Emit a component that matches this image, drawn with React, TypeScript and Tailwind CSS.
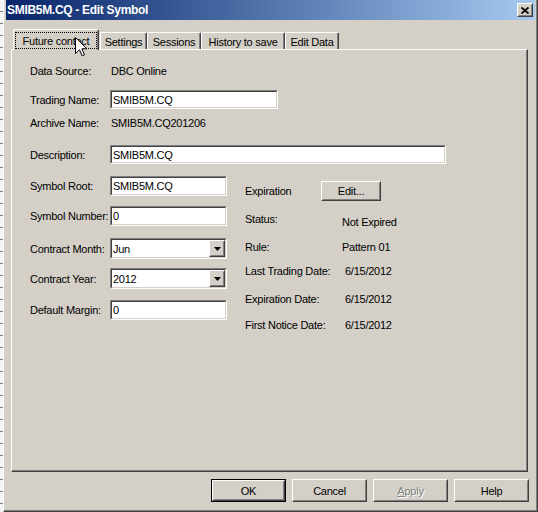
import React from "react";

const face = "bg-[#d4d0c8]";

function Sunken({ className = "", children }: { className?: string; children?: React.ReactNode }) {
  return (
    <div className={`border border-t-[#808080] border-l-[#808080] border-r-white border-b-white ${className}`}>
      <div className="h-full border border-t-[#404040] border-l-[#404040] border-r-[#d4d0c8] border-b-[#d4d0c8] bg-white flex items-center">
        {children}
      </div>
    </div>
  );
}

function Raised({ className = "", children }: { className?: string; children?: React.ReactNode }) {
  return (
    <div className={`border border-t-white border-l-white border-r-[#404040] border-b-[#404040] ${face} ${className}`}>
      <div className="h-full border border-t-[#d4d0c8] border-l-[#d4d0c8] border-r-[#808080] border-b-[#808080] flex items-center justify-center">
        {children}
      </div>
    </div>
  );
}

function TextBox({ value, className }: { value: string; className: string }) {
  return (
    <Sunken className={className}>
      <span className="pl-[1px] text-black">{value}</span>
    </Sunken>
  );
}

function DropDown({ value }: { value: string }) {
  return (
    <Sunken className="w-[117px] h-[21px]">
      <span className="pl-[1px] pt-[1px]">{value}</span>
      <Raised className="ml-auto w-[16px] h-full">
        <svg width="7" height="4" viewBox="0 0 7 4">
          <path d="M0 0h7L3.5 4z" fill="#000" />
        </svg>
      </Raised>
    </Sunken>
  );
}

function Tab({ label, w }: { label: string; w: string }) {
  return (
    <div
      className={`${w} h-[17px] border-l border-t border-l-white border-t-white border-r border-r-[#404040] shadow-[inset_-1px_0_0_#808080] rounded-tl-[2px] rounded-tr-[2px] flex items-center justify-center pt-[1px]`}
    >
      {label}
    </div>
  );
}

function Cursor() {
  return (
    <svg className="absolute left-[75px] top-[37px] z-20" width="13" height="20" viewBox="0 0 13 20">
      <path
        d="M0.5 0.5 L0.5 16.5 L4.5 12.8 L7.2 18.8 L9.5 17.8 L6.9 11.8 L12 11.8 Z"
        fill="#fff"
        stroke="#000"
        strokeWidth="1"
        strokeLinejoin="miter"
      />
    </svg>
  );
}

export default function App() {
  return (
    <div className="relative w-[538px] h-[512px] flex overflow-hidden bg-[#d4d0c8] font-['Liberation_Sans',Arial,sans-serif] text-[11px] leading-[14px] tracking-[-0.25px] text-black">
      {/* window behind */}
      <div className="w-[3px] h-full bg-[repeating-linear-gradient(to_bottom,#f4f4f4_0,#f4f4f4_11px,#808080_11px,#808080_12px)]" />

      {/* dialog */}
      <div className="w-[535px] h-[512px] border-l border-l-white border-r border-b border-r-[#404040] border-b-[#404040] shadow-[inset_-1px_-1px_0_#808080] pl-[2px] flex flex-col">
        {/* title bar */}
        <div className="w-[529px] h-[20px] bg-linear-to-r from-[#0a246a] to-[#a6caf0] flex items-center pl-[1px]">
          <span className="text-white font-bold text-[12px] tracking-[-0.3px]">SMIB5M.CQ - Edit Symbol</span>
          <Raised className="ml-auto mr-[2px] w-[16px] h-[14px]">
            <svg width="8" height="7" viewBox="0 0 8 7">
              <path d="M0.5 0.5 L7.5 6.5 M7.5 0.5 L0.5 6.5" stroke="#000" strokeWidth="1.8" />
            </svg>
          </Raised>
        </div>

        {/* tabs */}
        <div className="flex items-end h-[20px] mt-[9px] ml-[7px]">
          <div className="relative z-10 -mb-px w-[86px] h-[21px] bg-[#d4d0c8] border-l border-t border-l-white border-t-white border-r border-r-[#404040] shadow-[inset_-1px_0_0_#808080] rounded-tl-[2px] rounded-tr-[2px] flex justify-center">
            <div className="mt-[2px] w-[82px] h-[17px] border border-dotted border-black flex items-center justify-center">
              Future contact
            </div>
          </div>
          <div className="w-px" />
          <Tab label="Settings" w="w-[47px]" />
          <Tab label="Sessions" w="w-[54px]" />
          <Tab label="History to save" w="w-[84px]" />
          <Tab label="Edit Data" w="w-[54px]" />
        </div>

        {/* panel */}
        <div className="w-[517px] h-[423px] ml-[5px] border-l border-t border-l-white border-t-white border-r border-b border-r-[#404040] border-b-[#404040] shadow-[inset_-1px_-1px_0_#808080] pl-[18px]">
          <div className="flex items-center h-[18px] mt-[12px]">
            <span className="w-[80px]">Data Source:</span>
            <span className="pl-[1px]">DBC Online</span>
          </div>
          <div className="flex items-center h-[19px] mt-[10px]">
            <span className="w-[80px]">Trading Name:</span>
            <TextBox value="SMIB5M.CQ" className="w-[168px] h-[19px]" />
          </div>
          <div className="flex items-center h-[18px] mt-[5px]">
            <span className="w-[80px]">Archive Name:</span>
            <span className="pl-[1px]">SMIB5M.CQ201206</span>
          </div>
          <div className="flex items-center h-[19px] mt-[13px]">
            <span className="w-[80px]">Description:</span>
            <TextBox value="SMIB5M.CQ" className="w-[336px] h-[19px]" />
          </div>

          <div className="flex mt-[12px]">
            {/* left column */}
            <div className="w-[215px] flex flex-col">
              <div className="flex items-center h-[20px]">
                <span className="w-[80px]">Symbol Root:</span>
                <TextBox value="SMIB5M.CQ" className="w-[117px] h-[20px]" />
              </div>
              <div className="flex items-center h-[20px] mt-[10px]">
                <span className="w-[80px]">Symbol Number:</span>
                <TextBox value="0" className="w-[117px] h-[20px]" />
              </div>
              <div className="flex items-center h-[21px] mt-[12px]">
                <span className="w-[80px]">Contract Month:</span>
                <DropDown value="Jun" />
              </div>
              <div className="flex items-center h-[21px] mt-[9px]">
                <span className="w-[80px]">Contract Year:</span>
                <DropDown value="2012" />
              </div>
              <div className="flex items-center h-[20px] mt-[11px]">
                <span className="w-[80px]">Default Margin:</span>
                <TextBox value="0" className="w-[117px] h-[20px]" />
              </div>
            </div>

            {/* right column */}
            <div className="flex flex-col">
              <div className="flex items-center h-[20px] mt-[5px]">
                <span className="w-[76px]">Expiration</span>
                <Raised className="w-[60px] h-[20px]">Edit...</Raised>
              </div>
              <div className="flex items-start mt-[11px]">
                <span className="w-[97px]">Status:</span>
                <span className="mt-[3px]">Not Expired</span>
              </div>
              <div className="flex items-start mt-[11px]">
                <span className="w-[97px]">Rule:</span>
                <span>Pattern 01</span>
              </div>
              <div className="flex items-start mt-[10px]">
                <span className="w-[100px]">Last Trading Date:</span>
                <span>6/15/2012</span>
              </div>
              <div className="flex items-start mt-[14px]">
                <span className="w-[100px]">Expiration Date:</span>
                <span>6/15/2012</span>
              </div>
              <div className="flex items-start mt-[12px]">
                <span className="w-[100px]">First Notice Date:</span>
                <span>6/15/2012</span>
              </div>
            </div>
          </div>
        </div>

        {/* buttons */}
        <div className="flex gap-[6px] pl-[205px] mt-[7px]">
          <div className="w-[75px] h-[23px] border border-black">
            <Raised className="w-full h-full">OK</Raised>
          </div>
          <Raised className="w-[75px] h-[23px]">Cancel</Raised>
          <Raised className="w-[75px] h-[23px]">
            <span className="text-[#808080] [text-shadow:1px_1px_0_#fff]">
              <span className="underline">A</span>pply
            </span>
          </Raised>
          <Raised className="w-[75px] h-[23px]">Help</Raised>
        </div>
      </div>

      <Cursor />
    </div>
  );
}
